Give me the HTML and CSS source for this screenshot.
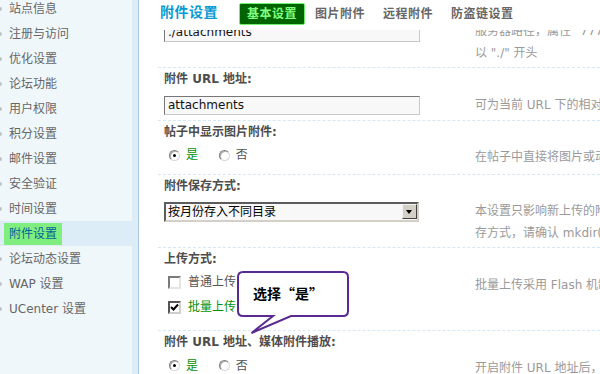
FILE: index.html
```html
<!DOCTYPE html>
<html lang="zh-CN">
<head>
<meta charset="utf-8">
<title>附件设置</title>
<link rel="stylesheet" href="styles.css">
</head>
<body>
<div class="page">
  <aside class="sidebar">
    <ul class="menu">
      <li><a>站点信息</a></li>
      <li><a>注册与访问</a></li>
      <li><a>优化设置</a></li>
      <li><a>论坛功能</a></li>
      <li><a>用户权限</a></li>
      <li><a>积分设置</a></li>
      <li><a>邮件设置</a></li>
      <li><a>安全验证</a></li>
      <li><a>时间设置</a></li>
      <li class="active"><a>附件设置</a></li>
      <li><a>论坛动态设置</a></li>
      <li><a>WAP 设置</a></li>
      <li><a>UCenter 设置</a></li>
    </ul>
  </aside>
  <main class="main">
    <header class="head">
      <h3 class="title">附件设置</h3>
      <nav class="tabs">
        <span class="tab on">基本设置</span>
        <span class="tab">图片附件</span>
        <span class="tab">远程附件</span>
        <span class="tab">防盗链设置</span>
      </nav>
    </header>
    <div class="viewport">
      <div class="sheet">
        <section class="item first">
          <div class="ctrl">
            <div class="cell cell-input-top"><div class="text">./attachments</div></div>
            <div class="tip tip-top">服务器路径，属性 "777"，必须为 web 可访问到的目录，不加 "/"，相对目录务必<br>以 "./" 开头</div>
          </div>
        </section>
        <section class="item">
          <div class="label">附件 URL 地址:</div>
          <div class="ctrl">
            <div class="cell cell-input"><div class="text">attachments</div></div>
            <div class="tip tip-input">可为当前 URL 下的相对地址或 http:// 开头的绝对地址，末尾不加 "/"</div>
          </div>
        </section>
        <section class="item">
          <div class="label">帖子中显示图片附件:</div>
          <div class="ctrl">
            <div class="cell cell-radio">
              <span class="opt"><span class="radio on"></span><span class="yes">是</span></span>
              <span class="opt"><span class="radio"></span><span>否</span></span>
            </div>
            <div class="tip tip-radio">在帖子中直接将图片或动画附件显示出来，而不需要点击附件链接</div>
          </div>
        </section>
        <section class="item">
          <div class="label">附件保存方式:</div>
          <div class="ctrl">
            <div class="cell cell-select">
              <div class="select"><span class="select-val">按月份存入不同目录</span><span class="select-btn"></span></div>
            </div>
            <div class="tip tip-select">本设置只影响新上传的附件，设置更改之前的附件仍存放在原来位置。如使用非默认储<br>存方式，请确认 mkdir() 函数可正常使用，否则会出现附件无法保存的问题</div>
          </div>
        </section>
        <section class="item">
          <div class="label">上传方式:</div>
          <div class="ctrl">
            <div class="cell cell-check">
              <div class="chk-line"><span class="checkbox"></span><span>普通上传</span></div>
              <div class="chk-line"><span class="checkbox on"><svg width="9" height="9" viewBox="0 0 9 9"><path d="M1 4 L3.5 6.5 L8 1.5" fill="none" stroke="#000" stroke-width="2"/></svg></span><span class="yes">批量上传</span></div>
            </div>
            <div class="tip tip-check">批量上传采用 Flash 机制，可一次选择多个文件上传</div>
          </div>
        </section>
        <section class="item">
          <div class="label">附件 URL 地址、媒体附件播放:</div>
          <div class="ctrl">
            <div class="cell cell-radio2">
              <span class="opt"><span class="radio on"></span><span class="yes">是</span></span>
              <span class="opt"><span class="radio"></span><span>否</span></span>
            </div>
            <div class="tip tip-radio2">开启附件 URL 地址后，媒体附件将可以直接播放</div>
          </div>
        </section>
      </div>
    </div>
  </main>
  <div class="callout">
    <svg class="callout-shape" width="116" height="68" viewBox="0 0 116 68">
      <path d="M7,3 H107 Q112,3 112,8 V42 Q112,47 107,47 H55 L15.5,64 L37,47 H7 Q2,47 2,42 V8 Q2,3 7,3 Z" fill="#fff" stroke="#5a2a92" stroke-width="2" stroke-linejoin="miter"/>
    </svg>
    <div class="callout-text">选择“是”</div>
  </div>
</div>
</body>
</html>
```
FILE: styles.css
```css
* { box-sizing: border-box; }
html, body { margin: 0; padding: 0; }
body {
  font: 12px/22px "DejaVu Sans", "Noto Sans CJK SC", sans-serif;
  color: #555;
  background: #fff;
}
.page {
  position: relative;
  display: flex;
  width: 600px;
  height: 374px;
  overflow: hidden;
}

/* sidebar */
.sidebar {
  width: 139px;
  flex: none;
  border-right: 1px solid #a9c7df;
  background: linear-gradient(to right, #f0f7fb 132px, #dcedf8 132px);
  overflow: hidden;
}
.menu {
  list-style: none;
  margin: -4px 0 0;
  padding: 0;
}
.menu li {
  position: relative;
  height: 25px;
  display: flex;
  align-items: center;
  padding-left: 4px;
}
.menu li::before {
  content: "";
  position: absolute;
  left: -2px;
  top: 11px;
  width: 4px;
  height: 4px;
  border-radius: 50%;
  background: #bcc4c8;
}
.menu a {
  padding: 0 5px;
  line-height: 22px;
  color: #666;
  white-space: nowrap;
}
.menu li.active { background: #dcedf8; }
.menu li.active::before { display: none; }
.menu li.active a {
  background: #80ee7e;
  color: #00649a;
}

/* main */
.main {
  flex: 1;
  display: flex;
  flex-direction: column;
  min-width: 0;
  background: #fff;
}
.head {
  height: 30px;
  flex: none;
  display: flex;
  align-items: flex-start;
  padding: 3px 0 0 21px;
  background: #fff;
}
.title {
  margin: 0 21px 0 0;
  font-size: 14px;
  line-height: 18px;
  font-weight: bold;
  letter-spacing: 0.5px;
  color: #0a9ad0;
  white-space: nowrap;
}
.tabs {
  display: flex;
  gap: 2px;
}
.tab {
  padding: 0 7px;
  line-height: 20px;
  border: 1px solid transparent;
  font-weight: bold;
  letter-spacing: 0.5px;
  color: #666;
  white-space: nowrap;
}
.tab.on {
  background: #006400;
  border-color: #70f070;
  border-radius: 2px;
  color: #80ff80;
}

.viewport {
  flex: 1;
  overflow: hidden;
}
.sheet {
  margin-top: -12px;
  padding-left: 19px;
}
.item { border-top: 1px dashed #d4e8f7; }
.item.first { border-top: none; }
.label {
  padding-left: 6px;
  line-height: 22px;
  font-weight: bold;
  color: #4d4d4d;
  white-space: nowrap;
}
.ctrl { display: flex; }
.cell {
  width: 317px;
  flex: none;
  padding-left: 6px;
}
.tip {
  flex: 1;
  min-width: 0;
  overflow: hidden;
  white-space: nowrap;
  color: #9a9a9a;
  line-height: 22px;
}

.cell-input-top { padding-top: 5px; }
.tip-top { padding: 2px 0 3px; }
.cell-input { padding-top: 6px; padding-bottom: 5px; }
.tip-input { padding-top: 4px; }
.cell-radio { padding-top: 1px; padding-bottom: 6px; }
.tip-radio { padding: 3px 0 4px; }
.cell-select { padding-top: 5px; }
.tip-select { padding: 3px 0 3px; }
.cell-check { padding-bottom: 10px; }
.tip-check { padding-top: 4px; }
.cell-radio2 { padding-top: 2px; }
.tip-radio2 { padding-top: 4px; }

.text {
  width: 256px;
  height: 19px;
  border: 1px solid;
  border-color: #777 #c8c8c8 #c8c8c8 #777;
  background: #f8f8f8;
  padding: 0 3px;
  line-height: 17px;
  color: #111;
  white-space: nowrap;
  overflow: hidden;
}

.opt {
  display: inline-flex;
  align-items: center;
  margin-right: 12px;
  line-height: 22px;
  color: #555;
}
.yes { color: #089008; }
.radio {
  position: relative;
  width: 11px;
  height: 11px;
  margin: 0 6px 0 5px;
  border-radius: 50%;
  border: 1px solid;
  border-color: #7c7c7c #d8d8d8 #d8d8d8 #7c7c7c;
  background: #fff;
  box-shadow: inset 1px 1px 0 #b0b0b0;
}
.radio.on::after {
  content: "";
  position: absolute;
  left: 3px;
  top: 3px;
  width: 3px;
  height: 3px;
  border-radius: 50%;
  background: #000;
}

.select {
  display: flex;
  align-items: center;
  width: 255px;
  height: 20px;
  border: 2px solid;
  border-color: #5c5c5c #d4d0c8 #d4d0c8 #5c5c5c;
  background: #f8f8f8;
}
.select-val {
  flex: 1;
  padding-left: 2px;
  color: #000;
  line-height: 16px;
  white-space: nowrap;
}
.select-btn {
  position: relative;
  width: 15px;
  height: 15px;
  margin-right: 0;
  flex: none;
  background: #d4d0c8;
  border: 1px solid;
  border-color: #f4f4f4 #404040 #404040 #f4f4f4;
}
.select-btn::after {
  content: "";
  position: absolute;
  left: 3px;
  top: 5px;
  border-left: 3.5px solid transparent;
  border-right: 3.5px solid transparent;
  border-top: 4px solid #000;
}

.chk-line {
  display: flex;
  align-items: center;
  height: 25px;
  color: #555;
}
.checkbox {
  display: flex;
  align-items: center;
  justify-content: center;
  width: 13px;
  height: 13px;
  margin: 0 7px 0 4px;
  border: 2px solid;
  border-color: #7a7a7a #e4e4e4 #e4e4e4 #7a7a7a;
  background: #fff;
}
.checkbox.on {
  border-color: #555 #cfcfcf #cfcfcf #555;
}

/* callout overlay */
.callout {
  position: absolute;
  left: 236px;
  top: 269px;
  width: 116px;
  height: 68px;
}
.callout-shape { display: block; }
.callout-text {
  position: absolute;
  left: 17px;
  top: 14px;
  font-family: "Noto Sans CJK SC", sans-serif;
  font-size: 14px;
  line-height: 20px;
  font-weight: bold;
  color: #000;
  white-space: nowrap;
}
```
